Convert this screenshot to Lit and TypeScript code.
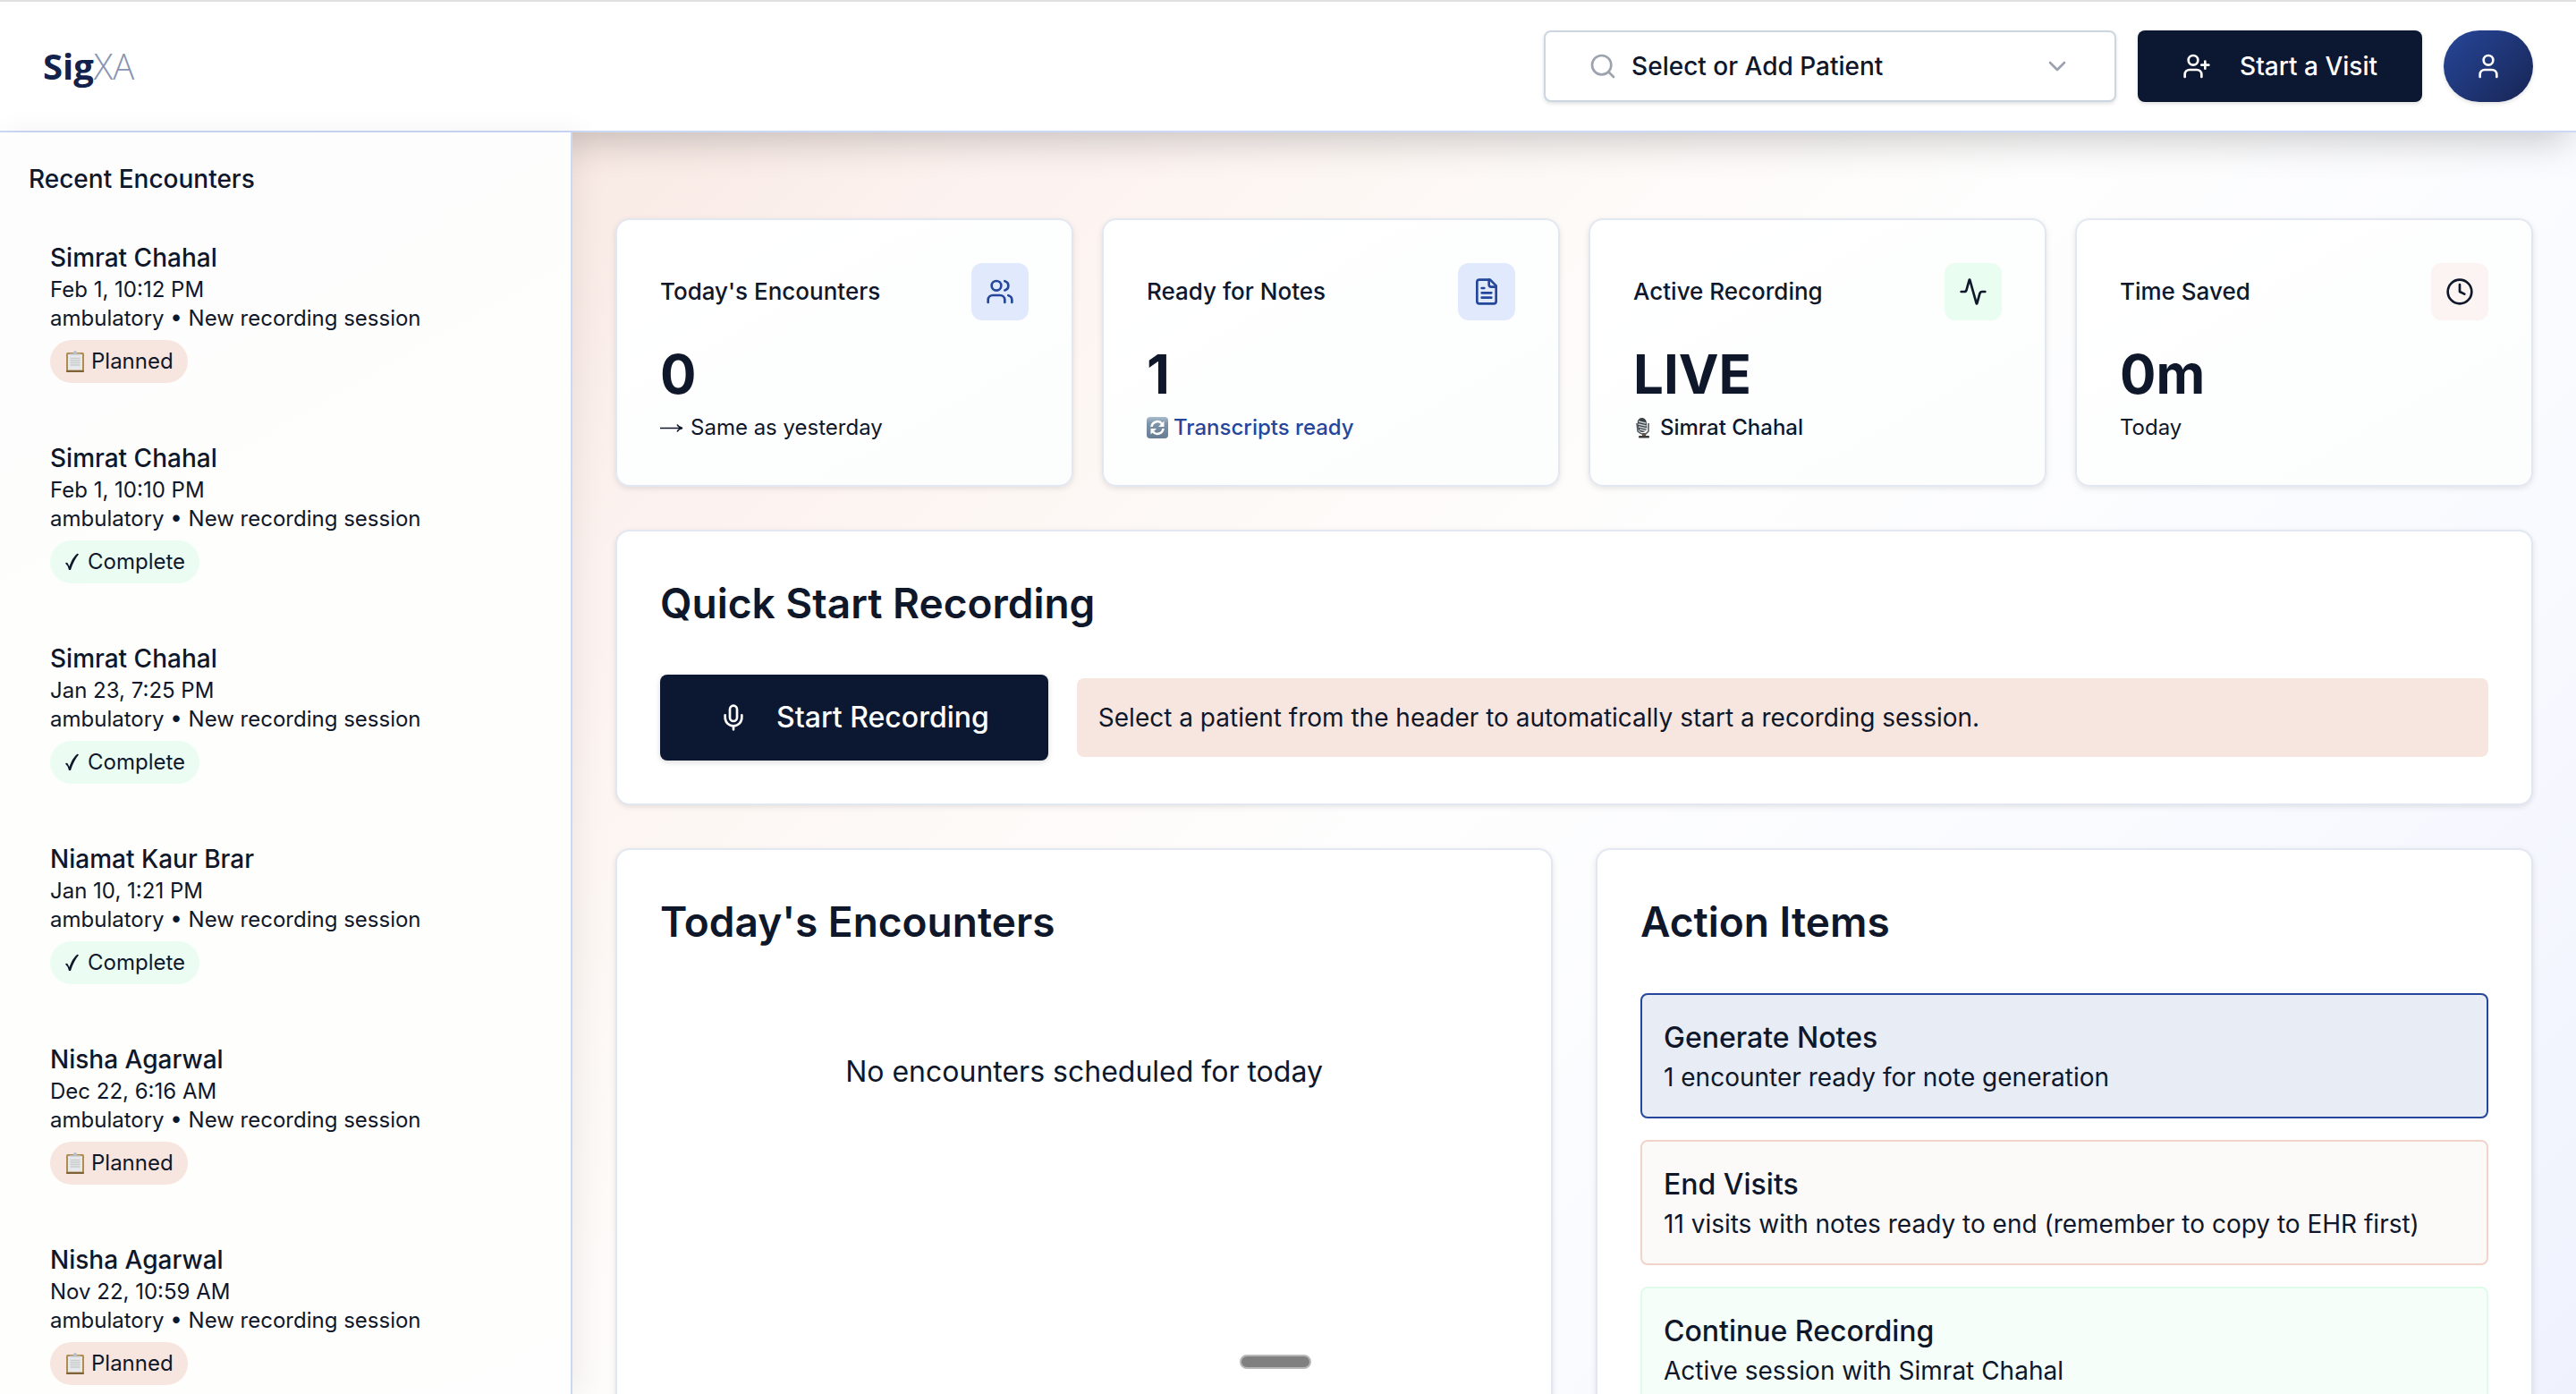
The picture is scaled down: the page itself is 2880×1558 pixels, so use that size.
import { LitElement, html, css, svg, nothing } from "lit";
import { customElement, state } from "lit/decorators.js";

type Status = "planned" | "complete";
interface Encounter { name: string; when: string; status: Status; }
interface Stat { title: string; value: string; tone: string; icon: string; note: string; mark?: string; noteTone?: string; }
interface Action { title: string; detail: string; tone: string; }

const ENCOUNTERS: Encounter[] = [
  { name: "Simrat Chahal", when: "Feb 1, 10:12 PM", status: "planned" },
  { name: "Simrat Chahal", when: "Feb 1, 10:10 PM", status: "complete" },
  { name: "Simrat Chahal", when: "Jan 23, 7:25 PM", status: "complete" },
  { name: "Niamat Kaur Brar", when: "Jan 10, 1:21 PM", status: "complete" },
  { name: "Nisha Agarwal", when: "Dec 22, 6:16 AM", status: "planned" },
  { name: "Nisha Agarwal", when: "Nov 22, 10:59 AM", status: "planned" },
];

const STATS: Stat[] = [
  { title: "Today's Encounters", value: "0", tone: "blue", icon: "users", mark: "arrow", note: "Same as yesterday" },
  { title: "Ready for Notes", value: "1", tone: "blue", icon: "file", mark: "sync", note: "Transcripts ready", noteTone: "link" },
  { title: "Active Recording", value: "LIVE", tone: "green", icon: "activity", mark: "studioMic", note: "Simrat Chahal", noteTone: "strong" },
  { title: "Time Saved", value: "0m", tone: "peach", icon: "clock", note: "Today" },
];

const ACTIONS: Action[] = [
  { title: "Generate Notes", detail: "1 encounter ready for note generation", tone: "blue" },
  { title: "End Visits", detail: "11 visits with notes ready to end (remember to copy to EHR first)", tone: "peach" },
  { title: "Continue Recording", detail: "Active session with Simrat Chahal", tone: "green" },
];

const ICONS: Record<string, unknown> = {
  search: svg`<circle cx="11" cy="11" r="8"/><path d="m21 21-4.3-4.3"/>`,
  chevron: svg`<path d="m6 9 6 6 6-6"/>`,
  userPlus: svg`<path d="M16 21v-2a4 4 0 0 0-4-4H6a4 4 0 0 0-4 4v2"/><circle cx="9" cy="7" r="4"/><path d="M19 8v6M22 11h-6"/>`,
  user: svg`<path d="M19 21v-2a4 4 0 0 0-4-4H9a4 4 0 0 0-4 4v2"/><circle cx="12" cy="7" r="4"/>`,
  users: svg`<path d="M16 21v-2a4 4 0 0 0-4-4H6a4 4 0 0 0-4 4v2"/><circle cx="9" cy="7" r="4"/><path d="M22 21v-2a4 4 0 0 0-3-3.87M16 3.13a4 4 0 0 1 0 7.75"/>`,
  file: svg`<path d="M15 2H6a2 2 0 0 0-2 2v16a2 2 0 0 0 2 2h12a2 2 0 0 0 2-2V7Z"/><path d="M14 2v4a2 2 0 0 0 2 2h4M10 9H8M16 13H8M16 17H8"/>`,
  activity: svg`<path d="M22 12h-2.48a2 2 0 0 0-1.93 1.46l-2.35 8.36a.25.25 0 0 1-.48 0L9.24 2.18a.25.25 0 0 0-.48 0l-2.35 8.36A2 2 0 0 1 4.49 12H2"/>`,
  clock: svg`<circle cx="12" cy="12" r="10"/><path d="M12 6v6l4 2"/>`,
  mic: svg`<path d="M12 2a3 3 0 0 0-3 3v7a3 3 0 0 0 6 0V5a3 3 0 0 0-3-3Z"/><path d="M19 10v2a7 7 0 0 1-14 0v-2M12 19v3"/>`,
};

const icon = (name: string) =>
  html`<svg class="icon" viewBox="0 0 24 24" aria-hidden="true">${ICONS[name]}</svg>`;

const MARKS: Record<string, unknown> = {
  arrow: html`<svg class="mark wide" viewBox="0 0 28 24" aria-hidden="true"><path d="M0 12.500H24M19 8.500Q20.500 11.500 25 12.500Q20.500 13.500 19 16.500" fill="none" stroke="#0f172a" stroke-width="1.600"/></svg>`,
  sync: html`<svg class="mark" viewBox="0 0 24 24" aria-hidden="true">
    <defs><linearGradient id="sync-face" x1="0" y1="0" x2="0" y2="1"><stop offset="0" stop-color="#a9bccb"/><stop offset=".3" stop-color="#7d94a9"/><stop offset="1" stop-color="#667c93"/></linearGradient></defs>
    <rect width="24" height="24" rx="4" fill="url(#sync-face)"/>
    <path d="M5.500 11a6.500 6.500 0 0 1 11.500-3.500M18.500 13a6.500 6.500 0 0 1-11.500 3.500" fill="none" stroke="#fff" stroke-width="2.600"/>
    <path d="M19.500 4.500v6.500h-6.500ZM4.500 19.500v-6.500h6.500Z" fill="#fff"/></svg>`,
  studioMic: html`<svg class="mark" viewBox="0 0 24 24" aria-hidden="true">
    <path d="M4 7 5 16q4 4 9 3l3-3V7" fill="none" stroke="#555b61" stroke-width="1.600"/>
    <rect x="5" y="1" width="10" height="16" rx="5" transform="rotate(-5 10 9)" fill="#3b4046"/>
    <path d="M6 5l8 2M5.500 8l9 2M6 11l9 2M7 14l7 1.500" stroke="#c9d0d6" stroke-width="1.300"/>
    <path d="M10 18h4v3h-4Z" fill="#5d5348"/><rect x="6" y="21" width="12" height="2.500" rx="1" fill="#3d3a37"/></svg>`,
  clipboard: html`<svg class="mark" viewBox="0 0 24 24" aria-hidden="true">
    <rect x="2" y="2" width="20" height="22" rx="1.500" fill="#b08d4f"/><rect x="2" y="22" width="20" height="2" rx="1" fill="#80633a"/>
    <rect x="4" y="4" width="16" height="17.500" fill="#e6e8ea"/><path d="M6.500 8.500h11M6.500 11h11M6.500 13.500h11M6.500 16h11" stroke="#c9cccf" stroke-width="1.600"/>
    <path d="M6 4.500V3h4q0-3 2-3t2 3h4v1.500Z" fill="#b9bdc2"/></svg>`,
  check: html`<svg class="mark small" viewBox="0 0 20 24" aria-hidden="true"><path d="M1 13.500q2-1.500 3 .5l1.500 3Q9 7 14 3q1-.5 2 .5Q10.500 10 7 21H5Q4 16 1 13.500Z" fill="#0f172a"/></svg>`,
};

@customElement("app-root")
export class AppRoot extends LitElement {
  @state() private patientMenuOpen = false;

  static styles = css`
    :host {
      --ink: #0f172a;
      --navy: #0c1831;
      --line: #cbd8f6;
      display: block;
      color: var(--ink);
      font-family: "Inter", "Liberation Sans", sans-serif;
      font-size: 28px;
      line-height: 40px;
    }
    * { box-sizing: border-box; }
    h1, h2, h3, p, ul { margin: 0; padding: 0; }
    ul { list-style: none; }
    button { font: inherit; color: inherit; border: 0; cursor: pointer; text-align: left; }
    .page { display: flex; flex-direction: column; height: 100vh; overflow: hidden; }
    .icon { width: 32px; height: 32px; flex: none; fill: none; stroke: currentColor; stroke-width: 2; stroke-linecap: round; stroke-linejoin: round; }
    .mark { width: 24px; height: 24px; flex: none; }
    .mark.small { width: 20px; }
    .mark.wide { width: 28px; }

    .topbar {
      display: flex; align-items: center; gap: 24px; flex: none;
      padding: 32px 48px; background: #fff;
      border-top: 2px solid #e0e0e0; border-bottom: 2px solid var(--line);
      box-shadow: 0 16px 40px -8px rgb(0 0 0 / 22%);
      position: relative; z-index: 1;
    }
    .logo { margin-right: auto; font-family: "Open Sans", sans-serif; font-size: 40px; font-weight: 700; color: #13224c; text-decoration: none; }
    .logo-light { font-weight: 300; color: #8795b3; }
    .picker, .visit, .avatar { display: flex; align-items: center; height: 80px; font-weight: 500; box-shadow: 0 2px 4px rgb(0 0 0 / 12%); }
    .picker { width: 640px; padding: 0 48px; gap: 16px; background: #fff; border: 2px solid #ccd6e1; border-radius: 8px; }
    .picker .icon { color: #9ca3af; }
    .picker-label { flex: 1; }
    .visit { gap: 32px; padding: 0 50px; border-radius: 8px; background: var(--navy); color: #fff; }
    .avatar { justify-content: center; width: 100px; padding: 0; border-radius: 40px; color: #fff; background: linear-gradient(135deg, #27479a, #172554); }

    .body { display: flex; flex: 1; min-height: 0; }
    .sidebar {
      width: 640px; flex: none; padding: 32px; overflow: hidden;
      border-right: 2px solid var(--line);
      background: linear-gradient(150deg, #fdfdfe, #fefefc 50%, #fefefe);
      box-shadow: 8px 0 32px rgb(0 0 0 / 6%);
      position: relative; z-index: 2;
    }
    .side-title { font-size: 28px; line-height: 40px; font-weight: 500; }
    .encounters { display: flex; flex-direction: column; gap: 16px; padding-top: 24px; }
    .encounter { display: flex; flex-direction: column; align-items: flex-start; width: 100%; height: 208px; padding: 24px; background: none; font-size: 24px; line-height: 32px; }
    .encounter-name { font-size: 28px; line-height: 40px; font-weight: 500; }
    .badge { display: inline-flex; align-items: center; gap: 6px; height: 48px; margin-top: 8px; padding: 0 16px; border-radius: 24px; }
    .badge.planned { background: #f7e6df; }
    .badge.complete { background: #ebfdf2; }

    .main {
      flex: 1; min-width: 0; padding: 96px 48px 0; overflow: hidden;
      display: flex; flex-direction: column; gap: 48px;
      background: linear-gradient(135deg, #f8e9e3 0%, #fcf2ef 14%, #fdf8f5 28%, #fefefe 46%, #f9faff 72%, #eff2fd 100%);
    }
    .card { background: #fff; border: 2px solid #e2e7f1; border-radius: 16px; padding: 48px; box-shadow: 0 2px 6px rgb(0 0 0 / 10%); }
    .stats { display: grid; grid-template-columns: repeat(4, 1fr); gap: 32px; }
    .stat { background: linear-gradient(150deg, #fff, #fcfdfd); }
    .stat-head { display: flex; align-items: center; justify-content: space-between; }
    .stat-title { font-size: 26px; line-height: 40px; font-weight: 500; }
    .stat-icon { display: grid; place-items: center; width: 64px; height: 64px; border-radius: 12px; }
    .stat-icon.blue { background: #e1e9fd; color: #25479b; }
    .stat-icon.green { background: #e9fdf1; }
    .stat-icon.peach { background: #fbf4f2; }
    .stat-value { margin-top: 24px; font-size: 60px; line-height: 72px; font-weight: 700; }
    .stat-note { display: flex; align-items: center; gap: 6px; margin-top: 8px; font-size: 24px; line-height: 32px; }
    .stat-note.link { color: #25479b; font-weight: 500; }
    .stat-note.strong { font-weight: 500; }

    .card-title { font-size: 46px; line-height: 64px; font-weight: 600; }
    .quick-row { display: flex; align-items: center; gap: 32px; margin-top: 48px; }
    .record { display: flex; align-items: center; gap: 32px; height: 96px; padding: 0 66px; border-radius: 8px; background: var(--navy); color: #fff; font-size: 32px; font-weight: 500; box-shadow: 0 2px 6px rgb(0 0 0 / 14%); }
    .hint { flex: 1; padding: 24px; border-radius: 8px; background: #f7e6df; }

    .columns { display: grid; grid-template-columns: 1fr 1fr; gap: 48px; flex: 1; min-height: 0; }
    .empty { padding: 112px 0; text-align: center; font-size: 32px; line-height: 48px; }
    .actions { display: flex; flex-direction: column; gap: 24px; margin-top: 48px; }
    .action { display: block; width: 100%; height: 140px; padding: 24px; border: 2px solid; border-radius: 8px; }
    .action.blue { background: #e8ecf5; border-color: #25479b; }
    .action.peach { background: #fcfaf9; border-color: #f0d3c9; }
    .action.green { background: #f5fef9; border-color: #defce9; }
    .action-title { display: block; font-size: 32px; line-height: 48px; font-weight: 500; }
    .action-detail { display: block; }
    .grip { position: absolute; z-index: 3; left: 48%; bottom: 28px; width: 80px; height: 16px; margin-left: 4px; padding: 0; border: 2px solid #b8b8b8; border-radius: 8px; background: #808080; }
  `;

  private badge(status: Status) {
    return html`<span class="badge ${status}">${MARKS[status === "planned" ? "clipboard" : "check"]}<span>${status === "planned" ? "Planned" : "Complete"}</span></span>`;
  }

  render() {
    return html`
      <div class="page">
        <header class="topbar">
          <a class="logo" href="#">Sig<span class="logo-light">XA</span></a>
          <button class="picker" type="button" aria-haspopup="listbox" aria-expanded=${this.patientMenuOpen}
            @click=${() => (this.patientMenuOpen = !this.patientMenuOpen)}>
            ${icon("search")}<span class="picker-label">Select or Add Patient</span>${icon("chevron")}
          </button>
          <button class="visit" type="button">${icon("userPlus")}<span>Start a Visit</span></button>
          <button class="avatar" type="button" aria-label="Account">${icon("user")}</button>
        </header>
        <div class="body">
          <aside class="sidebar">
            <h2 class="side-title">Recent Encounters</h2>
            <ul class="encounters">
              ${ENCOUNTERS.map((e) => html`<li><button class="encounter" type="button">
                <span class="encounter-name">${e.name}</span>
                <span>${e.when}</span>
                <span>ambulatory • New recording session</span>
                ${this.badge(e.status)}
              </button></li>`)}
            </ul>
          </aside>
          <main class="main">
            <section class="stats">
              ${STATS.map((s) => html`<article class="card stat">
                <div class="stat-head"><h3 class="stat-title">${s.title}</h3><span class="stat-icon ${s.tone}">${icon(s.icon)}</span></div>
                <p class="stat-value">${s.value}</p>
                <p class="stat-note ${s.noteTone ?? ""}">${s.mark ? MARKS[s.mark] : nothing}<span>${s.note}</span></p>
              </article>`)}
            </section>
            <section class="card">
              <h2 class="card-title">Quick Start Recording</h2>
              <div class="quick-row">
                <button class="record" type="button">${icon("mic")}<span>Start Recording</span></button>
                <p class="hint">Select a patient from the header to automatically start a recording session.</p>
              </div>
            </section>
            <div class="columns">
              <section class="card">
                <h2 class="card-title">Today's Encounters</h2>
                <p class="empty">No encounters scheduled for today</p>
              </section>
              <section class="card">
                <h2 class="card-title">Action Items</h2>
                <div class="actions">
                  ${ACTIONS.map((a) => html`<button class="action ${a.tone}" type="button">
                    <span class="action-title">${a.title}</span><span class="action-detail">${a.detail}</span>
                  </button>`)}
                </div>
              </section>
            </div>
          </main>
        </div>
        <button class="grip" type="button" aria-label="Resize panel"></button>
      </div>
    `;
  }
}
